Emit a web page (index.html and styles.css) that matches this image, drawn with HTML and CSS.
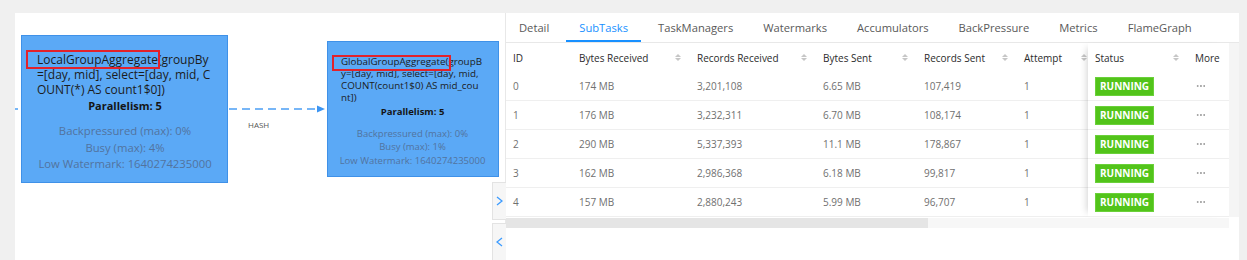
FILE: index.html
```html
<!DOCTYPE html>
<html lang="en">
<head>
    <meta charset="UTF-8">
    <title>Job Graph - SubTasks</title>
    <link rel="stylesheet" href="styles.css">
</head>
<body>
<div class="page">
    <div class="graph">
        <svg class="edges" width="490" height="247" viewBox="0 0 490 247">
            <line x1="0" y1="96" x2="3" y2="96" class="edge"/>
            <line x1="214" y1="96" x2="303" y2="96" class="edge"/>
            <polygon points="302,92.5 310,96 302,99.5" class="edge-head"/>
        </svg>
        <div class="edge-label">HASH</div>

        <div class="node node-local">
            <div class="node-desc">
                <div>LocalGroupAggregate(groupBy</div>
                <div>=[day, mid], select=[day, mid, C</div>
                <div>OUNT(*) AS count1$0])</div>
            </div>
            <div class="node-par">Parallelism: 5</div>
            <div class="node-stats">
                <div>Backpressured (max): 0%</div>
                <div>Busy (max): 4%</div>
                <div>Low Watermark: 1640274235000</div>
            </div>
        </div>

        <div class="node node-global">
            <div class="node-desc">
                <div>GlobalGroupAggregate(groupB</div>
                <div>y=[day, mid], select=[day, mid,</div>
                <div>COUNT(count1$0) AS mid_cou</div>
                <div>nt])</div>
            </div>
            <div class="node-par">Parallelism: 5</div>
            <div class="node-stats">
                <div>Backpressured (max): 0%</div>
                <div>Busy (max): 1%</div>
                <div>Low Watermark: 1640274235000</div>
            </div>
        </div>

        <div class="mark mark-local"></div>
        <div class="mark mark-global"></div>

        <div class="toggle toggle-open">
            <svg width="7" height="10" viewBox="0 0 7 10"><polyline points="1,1 6,5 1,9"/></svg>
        </div>
        <div class="toggle toggle-close">
            <svg width="7" height="10" viewBox="0 0 7 10"><polyline points="6,1 1,5 6,9"/></svg>
        </div>
    </div>

    <div class="drawer">
        <div class="tabs">
            <div class="tab">Detail</div>
            <div class="tab active">SubTasks</div>
            <div class="tab">TaskManagers</div>
            <div class="tab">Watermarks</div>
            <div class="tab">Accumulators</div>
            <div class="tab">BackPressure</div>
            <div class="tab">Metrics</div>
            <div class="tab">FlameGraph</div>
        </div>

        <div class="tbl">
            <div class="tbl-main">
                <div class="row head">
                    <div class="cell">ID</div>
                    <div class="cell sort">Bytes Received<span class="sorter"></span></div>
                    <div class="cell sort">Records Received<span class="sorter"></span></div>
                    <div class="cell sort">Bytes Sent<span class="sorter"></span></div>
                    <div class="cell sort">Records Sent<span class="sorter"></span></div>
                    <div class="cell sort">Attempt<span class="sorter"></span></div>
                </div>
                <div class="row">
                    <div class="cell">0</div><div class="cell">174 MB</div><div class="cell">3,201,108</div>
                    <div class="cell">6.65 MB</div><div class="cell">107,419</div><div class="cell">1</div>
                </div>
                <div class="row">
                    <div class="cell">1</div><div class="cell">176 MB</div><div class="cell">3,232,311</div>
                    <div class="cell">6.70 MB</div><div class="cell">108,174</div><div class="cell">1</div>
                </div>
                <div class="row">
                    <div class="cell">2</div><div class="cell">290 MB</div><div class="cell">5,337,393</div>
                    <div class="cell">11.1 MB</div><div class="cell">178,867</div><div class="cell">1</div>
                </div>
                <div class="row">
                    <div class="cell">3</div><div class="cell">162 MB</div><div class="cell">2,986,368</div>
                    <div class="cell">6.18 MB</div><div class="cell">99,817</div><div class="cell">1</div>
                </div>
                <div class="row">
                    <div class="cell">4</div><div class="cell">157 MB</div><div class="cell">2,880,243</div>
                    <div class="cell">5.99 MB</div><div class="cell">96,707</div><div class="cell">1</div>
                </div>
            </div>

            <div class="tbl-fixed">
                <div class="row head">
                    <div class="cell sort">Status<span class="sorter"></span></div>
                    <div class="cell">More</div>
                </div>
                <div class="row"><div class="cell"><span class="tag">RUNNING</span></div><div class="cell"><span class="more"></span></div></div>
                <div class="row"><div class="cell"><span class="tag">RUNNING</span></div><div class="cell"><span class="more"></span></div></div>
                <div class="row"><div class="cell"><span class="tag">RUNNING</span></div><div class="cell"><span class="more"></span></div></div>
                <div class="row"><div class="cell"><span class="tag">RUNNING</span></div><div class="cell"><span class="more"></span></div></div>
                <div class="row"><div class="cell"><span class="tag">RUNNING</span></div><div class="cell"><span class="more"></span></div></div>
            </div>

            <div class="vstrip"></div>
        </div>

        <div class="hscroll"><div class="thumb"></div></div>
    </div>
</div>
</body>
</html>
```

FILE: styles.css
```css
* {
    box-sizing: border-box;
    margin: 0;
    padding: 0;
}

body {
    background: #f0f0f0;
    font-family: "Open Sans", "Noto Sans", sans-serif;
    color: #333;
}

.page {
    display: flex;
    height: 260px;
    padding: 13px 8px 0 15px;
    overflow: hidden;
}

/* graph canvas */

.graph {
    position: relative;
    width: 491px;
    background: white;
    border-right: 1px solid #e8e8e8;
}

.edges {
    position: absolute;
    left: 0;
    top: 0;
}

.edge {
    stroke: #4b9ff5;
    stroke-width: 1.5;
    stroke-dasharray: 8 5;
}

.edge-head {
    fill: #3d95f2;
}

.edge-label {
    position: absolute;
    left: 233px;
    top: 106px;
    font-size: 8px;
    color: #555;
}

.node {
    position: absolute;
    background: #5ba9f6;
    border: 1px solid #3f91e8;
    color: #1c1c1c;
}

.node-local {
    left: 6px;
    top: 22px;
    width: 207px;
    height: 148px;
    padding: 16px 0 0 15px;
    font-size: 12px;
}

.node-local .node-desc {
    line-height: 15px;
}

.node-local .node-par {
    margin-top: 1px;
    line-height: 16px;
    font-size: 11px;
}

.node-local .node-stats {
    margin-top: 9px;
    line-height: 16.5px;
    font-size: 11.3px;
}

.node-global {
    left: 312px;
    top: 28px;
    width: 172px;
    height: 136px;
    padding: 14px 0 0 13px;
    font-size: 9.8px;
}

.node-global .node-desc {
    line-height: 12px;
}

.node-global .node-par {
    margin-top: 1px;
    line-height: 13px;
    font-size: 9.5px;
}

.node-global .node-stats {
    margin-top: 9px;
    line-height: 13.3px;
    font-size: 9.5px;
}

.node-desc div {
    white-space: nowrap;
}

.node-par {
    font-weight: bold;
    text-align: center;
    margin-left: -14px;
    color: #151515;
}

.node-stats {
    text-align: center;
    margin-left: -14px;
    color: #52739e;
    white-space: nowrap;
}

.mark {
    position: absolute;
    border: 2px solid #e2222b;
}

.mark-local {
    left: 11px;
    top: 37px;
    width: 134px;
    height: 19px;
}

.mark-global {
    left: 317px;
    top: 42px;
    width: 119px;
    height: 16px;
}

.toggle {
    position: absolute;
    left: 477px;
    width: 14px;
    background: #f6f6f6;
    border: 1px solid #e3e3e3;
    border-right: none;
    display: flex;
    align-items: center;
    justify-content: center;
}

.toggle svg polyline {
    fill: none;
    stroke: #3b9bff;
    stroke-width: 1.3;
}

.toggle-open {
    top: 169px;
    height: 38px;
}

.toggle-close {
    top: 210px;
    height: 60px;
    padding-bottom: 22px;
}

/* drawer */

.drawer {
    width: 733px;
    background: white;
}

.tabs {
    display: flex;
    height: 30px;
    border-bottom: 1px solid #e8e8e8;
}

.tab {
    position: relative;
    height: 29px;
    line-height: 29px;
    padding: 0 13px;
    margin-right: 4px;
    font-size: 11.2px;
    color: #595959;
}

.tab.active {
    color: #1890ff;
}

.tab.active::after {
    content: "";
    position: absolute;
    left: 0;
    right: 0;
    bottom: 0;
    height: 2px;
    background: #1890ff;
}

.tbl {
    display: flex;
}

.tbl-main {
    width: 582px;
    overflow: hidden;
}

.tbl-main .row {
    display: grid;
    grid-template-columns: 66px 118px 126px 101px 100px 79px;
    width: 590px;
}

.tbl-fixed {
    width: 141px;
    background: white;
    box-shadow: -6px 0 7px -5px rgba(0, 0, 0, 0.18);
    position: relative;
}

.tbl-fixed .row {
    display: grid;
    grid-template-columns: 100px 41px;
}

.vstrip {
    width: 10px;
    background: #f5f5f5;
}

.row {
    height: 29px;
    border-bottom: 1px solid #efefef;
    font-size: 10px;
    color: #707070;
}

.row.head {
    border-bottom: none;
    color: #2b2b2b;
}

.cell {
    display: flex;
    align-items: center;
    padding-left: 7px;
    white-space: nowrap;
}

.cell.sort {
    justify-content: space-between;
    padding-right: 9px;
}

.sorter {
    display: flex;
    flex-direction: column;
    gap: 1.5px;
}

.sorter::before,
.sorter::after {
    content: "";
    border-left: 3px solid transparent;
    border-right: 3px solid transparent;
}

.sorter::before {
    border-bottom: 3.5px solid #c6c6c6;
}

.sorter::after {
    border-top: 3.5px solid #c6c6c6;
}

.tag {
    display: inline-block;
    height: 19px;
    line-height: 17px;
    padding: 0 4px;
    background: #52c41a;
    border: 1px solid #6bd03a;
    color: white;
    font-weight: bold;
    font-size: 10px;
}

.more {
    margin-left: 1px;
    width: 10px;
    height: 2px;
    background: radial-gradient(circle, #a8a8a8 0.8px, transparent 1px) 0 0 / 3.3px 2px repeat-x;
}

.hscroll {
    width: 723px;
    height: 10px;
    margin-top: 1px;
    background: #f7f7f7;
}

.thumb {
    width: 422px;
    height: 10px;
    background: #e5e5e5;
}
```
